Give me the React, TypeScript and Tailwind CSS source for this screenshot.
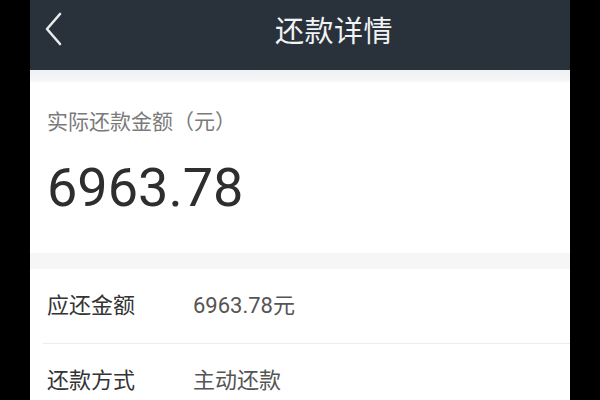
import React from 'react';

const font = { fontFamily: "Roboto, 'Noto Sans CJK SC', sans-serif" };

interface RowProps {
  label: string;
  value: string;
}

const DetailRow: React.FC<RowProps> = ({ label, value }) => (
  <div className="h-[74px] shrink-0 flex items-center px-[17px] text-[22px] leading-none">
    <div className="w-[146px] text-[#333]">{label}</div>
    <div className="text-[#555]">{value}</div>
  </div>
);

export default function App() {
  return (
    <div className="w-[600px] h-[400px] bg-black px-[30px] overflow-hidden" style={font}>
      <div className="h-full bg-white flex flex-col">
        <div className="h-[70px] shrink-0 bg-[#29323b] flex items-center pl-[15px] pb-[6px]">
          <svg width="17" height="34" viewBox="0 0 17 34" className="shrink-0 mb-[7px]">
            <path d="M15 2 L2 17 L15 32" fill="none" stroke="#e8eaec" strokeWidth="2.6" strokeLinecap="round" strokeLinejoin="round" />
          </svg>
          <div className="ml-[213px] text-[29px] leading-none text-[#f2f3f4] tracking-[0.5px]">还款详情</div>
        </div>

        <div className="h-[12px] shrink-0 bg-gradient-to-b from-[#eef0f3] to-[#f7f7f8]" />

        <div className="bg-white px-[17px] pt-[26px] pb-[38px]">
          <div className="text-[21px] leading-[28px] text-[#7a7a7a]">实际还款金额（元）</div>
          <div className="mt-[25px] text-[54px] leading-none text-[#2e2e2e]">6963.78</div>
        </div>

        <div className="h-[16px] shrink-0 bg-[#f6f6f6]" />

        <DetailRow label="应还金额" value="6963.78元" />
        <div className="ml-[13px] h-px shrink-0 bg-[#ececec]" />
        <DetailRow label="还款方式" value="主动还款" />
      </div>
    </div>
  );
}
